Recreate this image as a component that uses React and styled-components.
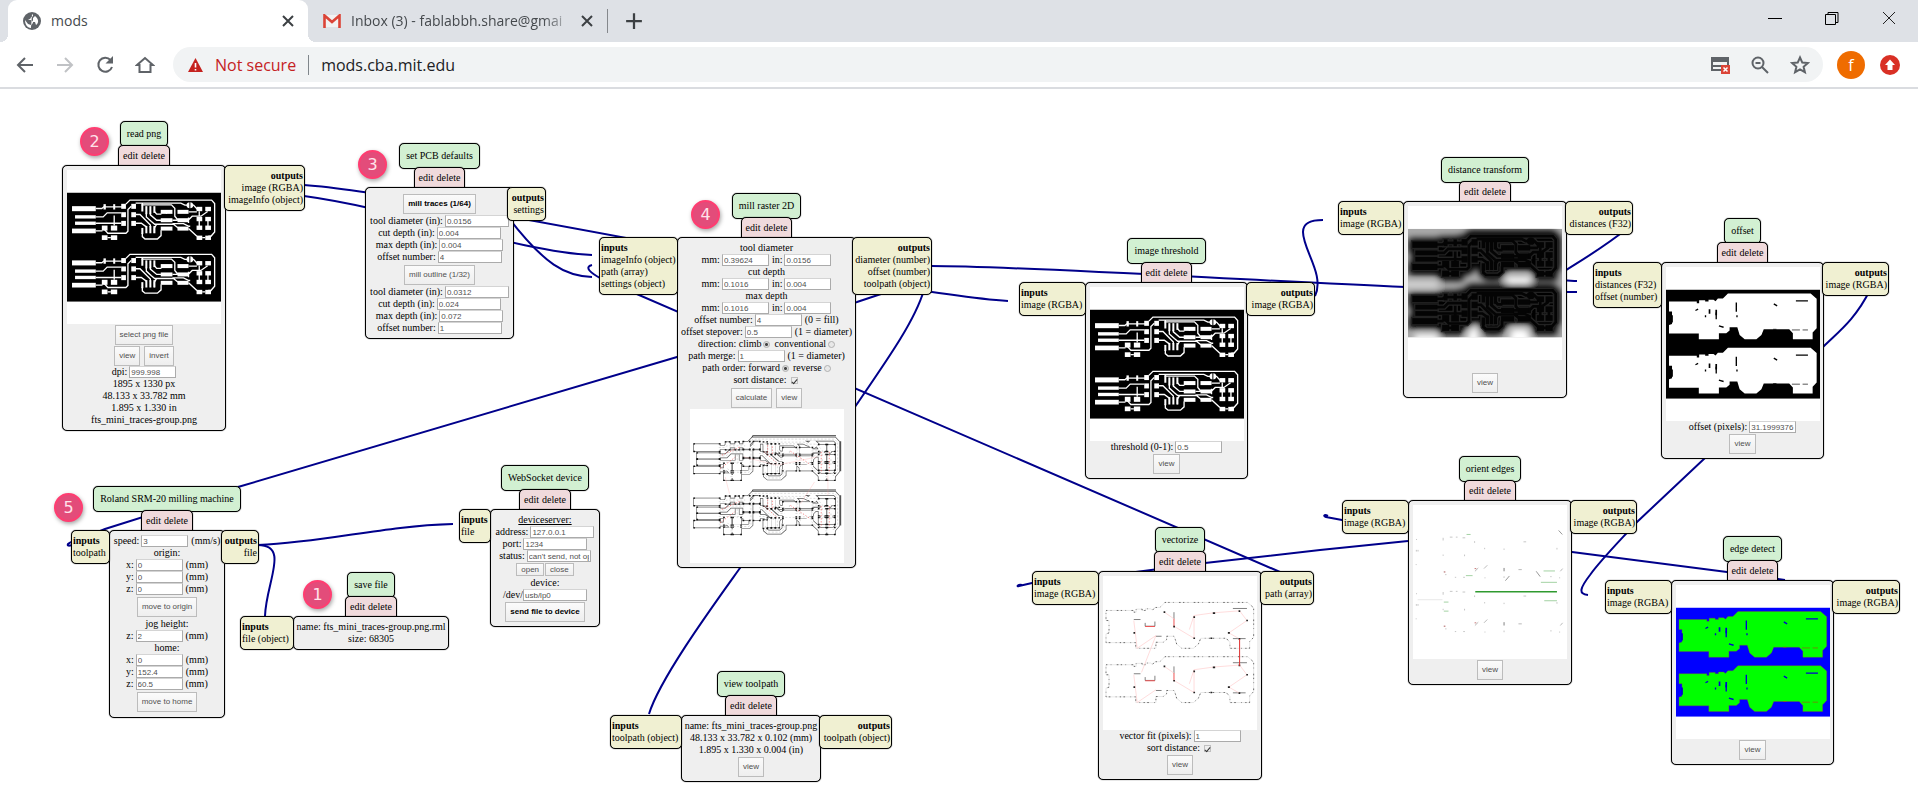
import React from "react";
import styled, { createGlobalStyle, css } from "styled-components";

const GlobalStyle = createGlobalStyle`
  * { box-sizing: border-box; }
  body { margin: 0; background: #fff; }
  button, input { font: inherit; margin: 0; }
  h2, p { margin: 0; font: inherit; }
`;

const UI_FONT = `"Open Sans", "Noto Sans", sans-serif`;
const NODE_FONT = `"Liberation Serif", "Times New Roman", serif`;
const CONTROL_FONT = `"Liberation Sans", Arial, sans-serif`;

/* ---------- browser frame ---------- */

const Page = styled.div`
  display: flex;
  flex-direction: column;
  min-height: 100vh;
  overflow: hidden;
`;

const TabStrip = styled.div`
  display: flex;
  align-items: center;
  height: 42px;
  padding-left: 8px;
  background: #dee1e6;
  font: 14px/20px ${UI_FONT};
  color: #45494d;
`;

const Tab = styled.div`
  position: relative;
  display: flex;
  align-items: center;
  gap: 10px;
  height: 42px;
  padding: 0 12px 0 15px;
  width: ${(p) => p.$width}px;
  ${(p) =>
    p.$active &&
    css`
      background: #fff;
      border-radius: 9px 9px 0 0;
      &::before,
      &::after {
        content: "";
        position: absolute;
        bottom: 0;
        width: 8px;
        height: 8px;
      }
      &::before {
        left: -8px;
        background: radial-gradient(circle at 0 0, #dee1e6 8px, #fff 8px);
      }
      &::after {
        right: -8px;
        background: radial-gradient(circle at 100% 0, #dee1e6 8px, #fff 8px);
      }
    `}
`;

const TabTitle = styled.span`
  flex: 1;
  white-space: nowrap;
  ${(p) => p.$fade && css`mask-image: linear-gradient(90deg, #000 88%, rgba(0, 0, 0, 0.2));`}
`;

const IconButton = styled.button`
  display: flex;
  flex: none;
  align-items: center;
  justify-content: center;
  width: ${(p) => p.$size || 16}px;
  height: ${(p) => p.$size || 16}px;
  padding: 0;
  border: 0;
  background: none;
  color: ${(p) => p.$color || "#3c4043"};
`;

const TabDivider = styled.span`
  width: 1px;
  height: 24px;
  margin-right: 17px;
  background: #85888c;
`;

const WindowControls = styled.div`
  display: flex;
  gap: 41px;
  margin: 0 21px 6px auto;
`;

const Toolbar = styled.div`
  display: flex;
  align-items: center;
  height: 47px;
  padding: 0 18px 0 15px;
  border-bottom: 2px solid #dadce0;
  background: #fff;
`;

const NavButtons = styled.div`
  display: flex;
  gap: 20px;
  margin-right: 18px;
`;

const AddressBar = styled.div`
  display: flex;
  flex: 1;
  align-items: center;
  height: 35px;
  padding: 0 13px;
  border-radius: 18px;
  background: #f1f3f4;
  font: 16px/22px ${UI_FONT};
`;

const SecurityNote = styled.span`
  margin-left: 10px;
  color: #c5221f;
`;

const AddressDivider = styled.span`
  width: 1px;
  height: 20px;
  margin: 0 12px;
  background: #80868b;
`;

const AddressInput = styled.input`
  flex: 1;
  min-width: 0;
  padding: 0;
  border: 0;
  background: none;
  color: #202124;
  outline: 0;
`;

const AddressActions = styled.div`
  display: flex;
  gap: 20px;
`;

const Avatar = styled.button`
  width: 28px;
  height: 28px;
  margin: 0 15px 0 14px;
  padding: 0;
  border: 0;
  border-radius: 50%;
  background: #ef6c00;
  color: #fff;
  font: 16px/24px ${UI_FONT};
`;

/* ---------- node canvas ---------- */

const Canvas = styled.main`
  position: relative;
  flex: 1;
  min-height: 720px;
  font: 10px/12px ${NODE_FONT};
  color: #000;
  white-space: nowrap;
`;

const Wires = styled.svg`
  position: absolute;
  top: 0;
  left: 0;
  overflow: visible;
  width: 100%;
  height: 100%;
`;

const NodeBox = styled.section`
  position: absolute;
  left: ${(p) => p.$left}px;
  top: ${(p) => p.$top}px;
  display: grid;
  grid-template-columns: ${(p) => p.$cols};
  align-items: start;
`;

const NodeHead = styled.header`
  grid-column: 2;
  display: flex;
  flex-direction: column;
  align-items: center;
`;

const outlined = css`
  border: 1px solid #000;
  border-radius: 5px;
  box-shadow: 0 0 1px #000;
`;

const NodeTitle = styled.h2`
  ${outlined}
  height: 26px;
  padding: 6px;
  background: #d2f0d2;
`;

const NodeActions = styled.div`
  ${outlined}
  position: relative;
  display: flex;
  gap: 3px;
  height: 21px;
  margin: -2px 0 -1px;
  padding: 4px;
  border-radius: 5px 5px 0 0;
  background: #f0dadc;
`;

const ActionButton = styled.button`
  padding: 0;
  border: 0;
  background: none;
  color: #000;
`;

const Body = styled.div`
  ${outlined}
  position: relative;
  grid-column: 2;
  grid-row: 2;
  display: flex;
  flex-direction: column;
  align-items: center;
  padding: 4px 0;
  background: #efefef;
`;

const Port = styled.div`
  ${outlined}
  position: relative;
  z-index: 1;
  grid-row: 2;
  grid-column: ${(p) => (p.$side === "in" ? 1 : 3)};
  margin: ${(p) => (p.$side === "in" ? "0 -1px 0 0" : `0 0 0 -${p.$overlap || 2}px`)};
  padding: 4px 1px;
  background: #f0f0d2;
  text-align: ${(p) => (p.$side === "in" ? "left" : "right")};
`;

const PortTitle = styled.strong`
  display: block;
`;

const Row = styled.div`
  display: flex;
  align-items: center;
  justify-content: center;
  gap: ${(p) => (p.$wide ? 4 : 3)}px;
  height: 12px;
  text-decoration: ${(p) => (p.$underline ? "underline" : "none")};
`;

const FieldLabel = styled.label`
  display: flex;
  align-items: center;
  gap: ${(p) => (p.$tight ? 0 : 2)}px;
`;

const TextBox = styled.input`
  width: ${(p) => p.$width || 47}px;
  height: 12px;
  padding: 0 1px;
  border: 1px solid #ababab;
  border-top-color: #d4d4d4;
  background: #fff;
  color: #505050;
  font: 8px/10px ${CONTROL_FONT};
`;

const Radio = styled.input`
  appearance: none;
  width: 7px;
  height: 7px;
  border: 1px solid #b0b0b0;
  border-radius: 50%;
  background: #e8e8e8;
  &:checked {
    background: radial-gradient(circle, #444 1px, #ddd 2px);
  }
`;

const Check = styled.input`
  appearance: none;
  display: grid;
  place-items: center;
  width: 7px;
  height: 7px;
  margin: 0 2px;
  border: 1px solid #c0c0c0;
  background: #eee;
  &:checked::after {
    content: "";
    width: 2px;
    height: 5px;
    border: solid #333;
    border-width: 0 1px 1px 0;
    transform: rotate(40deg);
  }
`;

const ButtonRow = styled.div`
  display: flex;
  align-items: center;
  gap: ${(p) => (p.$small ? 1 : 4)}px;
  height: ${(p) => (p.$small ? 15 : p.$tall ? 23 : 21)}px;
`;

const ControlButton = styled.button`
  height: ${(p) => (p.$small ? 13 : 20)}px;
  padding: 0 4px;
  border: 1px solid #bcbcbc;
  background: linear-gradient(#fbfbfb, #eeeeee);
  color: ${(p) => (p.$strong ? "#000" : "#505050")};
  font: ${(p) => (p.$strong ? "bold" : "normal")} 8px/10px ${CONTROL_FONT};
`;

const Thumb = styled.svg`
  display: block;
  width: 154px;
  height: 154px;
  background: #fff;
`;

const Badge = styled.span`
  position: absolute;
  left: ${(p) => p.$x - 14}px;
  top: ${(p) => p.$y - 14}px;
  width: 29px;
  height: 29px;
  border: 2px solid #ff3d71;
  border-radius: 50%;
  background: #e34c7a;
  box-shadow: 1px 2px 4px rgba(0, 0, 0, 0.35);
  color: #ffe3ea;
  font: 16px/25px "DejaVu Sans", sans-serif;
  text-align: center;
`;

/* ---------- drawings ---------- */

const PADS = [
  [15, 40, 71, 15], [24, 67, 62, 10], [24, 86, 62, 10], [15, 107, 71, 14],
  [109, 34, 7, 16], [138, 34, 6, 16],
  [162, 33, 14, 15], [162, 58, 14, 15], [162, 84, 14, 15],
  [192, 33, 14, 15], [192, 58, 14, 15], [192, 84, 14, 15],
  [104, 98, 17, 15], [131, 98, 19, 15], [104, 127, 17, 14], [131, 127, 19, 14],
  [222, 34, 6, 22], [234, 40, 6, 24], [246, 40, 6, 24], [258, 40, 6, 20],
  [222, 105, 6, 18], [234, 99, 6, 22], [246, 99, 6, 22], [258, 99, 6, 22],
  [280, 51, 35, 12], [280, 76, 35, 12], [280, 101, 35, 12],
  [330, 51, 33, 12], [330, 76, 33, 12], [330, 101, 33, 12],
  [387, 42, 17, 13], [413, 42, 17, 13], [387, 72, 17, 13], [413, 72, 17, 13],
  [387, 98, 17, 13], [413, 98, 17, 13], [387, 128, 17, 13], [413, 128, 17, 13],
];

const TRACES = [
  "M86 47H104L110 42H165", "M86 72H108L120 60H162", "M86 91H162", "M86 114H106",
  "M141 68V98", "M112 110L122 121H176L182 115V50L192 40", "M176 34L188 22H432L441 32V117L430 130H422",
  "M205 31H340L352 37H378L390 50", "M225 31V36H312L322 46V70L332 82", "M249 60V66L268 82H282",
  "M206 65H218L249 96V103", "M206 91H222L237 102", "M237 62V72L252 86L262 94H318L332 105",
  "M261 56L268 64H282", "M297 63V57", "M315 92H348L364 100H368", "M363 57H388", "M363 107L388 130",
  "M225 120V131L233 138H270L281 128V112", "M261 120V105L268 94", "M362 82L374 70H400L420 56",
  "M395 55V72", "M421 82V102", "M395 82V102", "M121 134H131", "M404 134H413", "M315 82H330", "M363 90V74",
];

const SILHOUETTE =
  "M9 35H92V40H99V31H117V35H127V30H142L148 34L155 26H170L185 11H432L450 27V115L438 128V148H379V130L368 118H292L285 135L270 148H235L220 135L213 112L190 112V122L180 130H158V148H98V131H9V105L18 102V65H9Z";

const SLOTS = "M388 33H424M210 38V66M322 42L332 48M88 62L96 58M118 76V82M150 68V88M158 108L172 112M212 76V82";

function Board({ color, grow = 0 }) {
  return (
    <g fill={color} stroke="none">
      {PADS.map(([x, y, w, h], i) => (
        <rect key={i} x={x - grow} y={y - grow} width={w + grow * 2} height={h + grow * 2} />
      ))}
      <ellipse cx="367" cy="37" rx={10 + grow} ry={9 + grow} />
      <path d={TRACES.join("")} fill="none" stroke={color} strokeWidth={4 + grow * 2} />
    </g>
  );
}

function Twice({ children }) {
  return (
    <>
      <g>{children}</g>
      <g transform="translate(0 162)">{children}</g>
    </>
  );
}

function TracesArt() {
  return (
    <>
      <rect width="460" height="325" />
      <Twice>
        <Board color="#fff" />
        <path d="M367 26V48" stroke="#000" strokeWidth="3" />
      </Twice>
    </>
  );
}

function DistanceArt() {
  return (
    <>
      <defs>
        <filter id="soft" x="-10%" y="-10%" width="120%" height="120%">
          <feGaussianBlur stdDeviation="9" />
        </filter>
        <filter id="faint"><feGaussianBlur stdDeviation="2" /></filter>
        <clipPath id="frame"><rect width="460" height="325" /></clipPath>
      </defs>
      <g clipPath="url(#frame)">
        <rect width="460" height="325" fill="#a8a8a8" />
        <g filter="url(#soft)">
          <path d="M-20 162H90V172H-20ZM290 145H370L360 170H300ZM300 345L310 300H355L370 345ZM170 345L190 295H205L215 345ZM20 345V315H90V345Z" fill="#fff" />
          <Twice>
            <path d={SILHOUETTE} fill="#000" stroke="#000" strokeWidth="14" />
          </Twice>
        </g>
        <g filter="url(#faint)">
          <Twice>
            <Board color="#242424" grow={6} />
          </Twice>
        </g>
        <Twice>
          <Board color="#040404" grow={2} />
        </Twice>
      </g>
    </>
  );
}

function FilledArt({ back, fill, slot, edge }) {
  return (
    <>
      <rect width="460" height="325" fill={back} />
      <Twice>
        <path d={SILHOUETTE} fill={fill} stroke={edge} strokeWidth="1" />
        <path d={SLOTS} stroke={slot} strokeWidth="4" fill="none" />
        <path d="M376 120H400M408 120H424M320 118H330" stroke={edge || slot} strokeWidth="2" />
        <path d="M130 58V72M150 60V76M18 76V98" stroke={slot} strokeWidth="5" />
      </Twice>
    </>
  );
}

function ToolpathArt() {
  return (
    <>
      <Twice>
        <path d="M182 24L188 12H436" fill="none" stroke="#333" strokeWidth="3" />
        <path d="M450 28V118" fill="none" stroke="#333" strokeWidth="3" />
        <Board color="#5a5a5a" grow={5} />
        <Board color="#fff" grow={3} />
        <path d={TRACES.join("")} fill="none" stroke="#ccc" strokeWidth="2" strokeDasharray="6 5" />
        {PADS.map(([x, y, w, h], i) => (
          <path
            key={i}
            d={`M${x - 5} ${y - 4}h5M${x + w} ${y - 4}h5M${x - 5} ${y + h + 4}h5M${x + w} ${y + h + 4}h5`}
            stroke="#111"
            strokeWidth="4"
          />
        ))}
        <path d="M95 70L150 45M90 110L135 76M222 60L262 96M232 40V64M246 44V66M392 60V124M416 60V124M300 58L360 98" stroke="#e33" strokeWidth="2" strokeDasharray="4 5" opacity=".8" />
      </Twice>
      <path d="M105 135L118 185M372 150L330 215M412 130V190M160 75L260 100L380 75" fill="none" stroke="#f99" strokeWidth="2" opacity=".4" />
    </>
  );
}

function VectorArt() {
  return (
    <>
      <Twice>
        <path d={SILHOUETTE} fill="none" stroke="#ddd" strokeWidth="2" />
        <path d={SILHOUETTE} fill="none" stroke="#333" strokeWidth="2" strokeDasharray="4 10 2 16 5 7" />
        <path d="M388 29H430M388 119H426M212 40V60M92 62H112M126 72V82H155V68M158 112H175" fill="none" stroke="#444" strokeWidth="2" />
        <path d="M92 65L102 148L158 110M183 40L212 60M212 82L272 118V50L330 42L408 36L430 65L376 102L408 120M258 92L272 50" fill="none" stroke="#fcc" strokeWidth="2" />
        <path d="M126 83H155M212 60V84" stroke="#e55" strokeWidth="3" />
        <path d="M181 40h5M210 83h5M270 55h5M270 118h5M328 43h7M405 37h5M428 65h5M373 102h6M405 120h5M91 102h5M321 118h5" stroke="#222" strokeWidth="5" />
      </Twice>
      <path d="M158 110L115 220" stroke="#fcc" strokeWidth="2" />
      <path d="M408 120V200" stroke="#d33" strokeWidth="3" />
    </>
  );
}

function OrientArt() {
  return (
    <>
      <Twice>
        <path
          d="M9 35h3M90 30v8M110 28h8M128 28h5M148 30h8M184 40v5M214 60v4M272 62v4M330 42h8M430 60v5M10 66v5M15 66v5M96 140h4M125 148h4M150 148h5M215 148v3M272 145v5M410 146h4M438 148v3M154 80v5M90 80v4M8 110h3M92 132h3"
          stroke="#aaa" strokeWidth="2" fill="none"
        />
        <path d="M185 130L195 120M212 122L222 112M440 130L447 122M315 125h10" stroke="#999" strokeWidth="2" fill="none" />
        <path d="M272 120v10" stroke="#444" strokeWidth="2" fill="none" />
        <path d="M92 132h5M184 122h5" stroke="#a33" strokeWidth="2" />
      </Twice>
      <path d="M14 215H88" stroke="#ddd" strokeWidth="2" />
      <path d="M186 191H430" stroke="#2f9a2f" strokeWidth="4" />
      <path d="M390 129H424M382 163H430M392 218H430M158 143H178M92 222H106M92 249H106M160 20H172" stroke="#7b7" strokeWidth="2" />
      <path d="M276 158L288 144M368 130L380 146M435 8L446 20" stroke="#666" strokeWidth="2" />
    </>
  );
}

const ART = {
  traces: <TracesArt />,
  distance: <DistanceArt />,
  offset: <FilledArt back="#000" fill="#fff" slot="#000" />,
  edges: <FilledArt back="#00f" fill="#0f0" slot="#0000d0" edge="#9a5a10" />,
  toolpath: <ToolpathArt />,
  vector: <VectorArt />,
  orient: <OrientArt />,
};

function Preview({ art }) {
  return (
    <Thumb viewBox="0 0 460 460" role="img" aria-label={`${art} preview`}>
      <g transform="translate(0 68)">{ART[art]}</g>
    </Thumb>
  );
}

/* ---------- node parts ---------- */

function Field({ label, value, width, tight }) {
  return (
    <FieldLabel $tight={tight}>
      {label}
      <TextBox $width={width} defaultValue={value} />
    </FieldLabel>
  );
}

function Node({ title, x, y, width, inputs, outputs, children }) {
  const inWidth = inputs ? inputs.width : 0;
  const outWidth = outputs ? outputs.width : 0;
  return (
    <NodeBox $left={x - inWidth} $top={y - 133} $cols={`${inWidth}px ${width}px ${outWidth}px`}>
      <NodeHead>
        <NodeTitle>{title}</NodeTitle>
        <NodeActions>
          <ActionButton>edit</ActionButton>
          <ActionButton>delete</ActionButton>
        </NodeActions>
      </NodeHead>
      {inputs && (
        <Port $side="in">
          <PortTitle>inputs</PortTitle>
          {inputs.rows.map((r) => <div key={r}>{r}</div>)}
        </Port>
      )}
      <Body>{children}</Body>
      {outputs && (
        <Port $side="out" $overlap={outputs.overlap}>
          <PortTitle>outputs</PortTitle>
          {outputs.rows.map((r) => <div key={r}>{r}</div>)}
        </Port>
      )}
    </NodeBox>
  );
}

const ViewButton = () => (
  <ButtonRow><ControlButton>view</ControlButton></ButtonRow>
);

const Axis = ({ name, value }) => (
  <Row><Field label={`${name}:`} value={value} />(mm)</Row>
);

const WIRES = [
  "M304 185C430 194 880 293 1008 301",
  "M304 196C400 209 520 252 592 255",
  "M508 217C545 265 565 276 592 277",
  "M1280 572L602 279C590 273 584 267 592 265",
  "M931 266C1050 266 1400 291 1577 292",
  "M1628 228C1600 250 1580 261 1560 274C1540 280 1560 280 1577 281",
  "M1870 290C1855 320 1838 332 1824 346L1637 522C1612 549 1600 561 1590 575C1580 588 1578 594 1588 595",
  "M1785 580L1727 572L1572 552L1342 520L1326 517C1323 516 1324 514 1328 516",
  "M1408 541L1320 550L1205 563L1128 573L1032 583L1019 586C1016 587 1018 584 1022 585",
  "M1315 296C1325 275 1303 250 1303 232C1303 222 1312 220 1323 220",
  "M890 291L857 302L677 357L238 487L105 529C82 538 71 541 68 544C67 546 69 546 72 545",
  "M924 290C915 320 890 356 857 404L740 568C715 603 660 678 649 714",
  "M258 545C330 542 380 526 453 524",
  "M258 545C290 545 266 582 265 616",
];

const rgba = "image (RGBA)";

/* ---------- icons ---------- */

const Stroke = ({ d, size = 16, width = 2, box = 16 }) => (
  <svg width={size} height={size} viewBox={`0 0 ${box} ${box}`} fill="none" stroke="currentColor" strokeWidth={width}>
    <path d={d} />
  </svg>
);

const CloseIcon = () => <Stroke d="M3 3L13 13M13 3L3 13" />;

function BrowserFrame() {
  return (
    <header>
      <TabStrip>
        <Tab $active $width={300}>
          <svg width="18" height="18" viewBox="0 0 18 18">
            <circle cx="9" cy="9" r="9" fill="#5f6368" />
            <path d="M9 2C11 3 10 5 8 5C8 7 6 7 5 8C7 8 10 8 10 10C10 12 8 12 8 16M8 16C4 16 2 12 2 8L5 12L8 13ZM12 4C16 7 16 11 13 13L12 10H10L10 6Z" fill="#fff" />
          </svg>
          <TabTitle>mods</TabTitle>
          <IconButton aria-label="Close tab"><CloseIcon /></IconButton>
        </Tab>
        <Tab $width={299}>
          <svg width="18" height="14" viewBox="0 0 18 14">
            <path d="M1 1H17V13H1Z" fill="#f2f2f2" />
            <path d="M1.5 14V1.5L9 8L16.5 1.5V14" fill="none" stroke="#db4437" strokeWidth="2.6" />
          </svg>
          <TabTitle $fade>Inbox (3) - fablabbh.share@gmai</TabTitle>
          <IconButton aria-label="Close tab"><CloseIcon /></IconButton>
        </Tab>
        <TabDivider />
        <IconButton aria-label="New tab" $size={18}><Stroke d="M8 1V15M1 8H15" size={18} /></IconButton>
        <WindowControls>
          <IconButton aria-label="Minimize" $color="#000"><Stroke d="M1 8.5H15" width={1} /></IconButton>
          <IconButton aria-label="Restore" $color="#000"><Stroke d="M1.5 4.5H11.500V14.500H1.500ZM4 4.500V2.500H14V12.500H12" width={1} /></IconButton>
          <IconButton aria-label="Close window" $color="#222"><Stroke d="M2 2L14 14M14 2L2 14" width={1} /></IconButton>
        </WindowControls>
      </TabStrip>
      <Toolbar>
        <NavButtons>
          <IconButton aria-label="Back" $size={20} $color="#5f6368"><Stroke d="M18 10H3M10 3L3 10L10 17" size={20} box={20} /></IconButton>
          <IconButton aria-label="Forward" $size={20} $color="#c0c2c5"><Stroke d="M2 10H17M10 3L17 10L10 17" size={20} box={20} /></IconButton>
          <IconButton aria-label="Reload" $size={20} $color="#5f6368">
            <svg width="20" height="20" viewBox="0 0 20 20">
              <path d="M15.500 5A7 7 0 1 0 17 12" fill="none" stroke="currentColor" strokeWidth="2" />
              <path d="M18 1V8.500H10.500Z" fill="currentColor" />
            </svg>
          </IconButton>
          <IconButton aria-label="Home" $size={20} $color="#5f6368"><Stroke d="M2 10L10 3L18 10H15.500V17H4.500V10Z" size={20} box={20} /></IconButton>
        </NavButtons>
        <AddressBar>
          <svg width="19" height="16" viewBox="0 0 19 16">
            <path d="M9.500 1L17 15H2Z" fill="#c5221f" />
            <path d="M9.500 6V10.500M9.500 12V13.500" stroke="#fff" strokeWidth="1.600" />
          </svg>
          <SecurityNote>Not secure</SecurityNote>
          <AddressDivider />
          <AddressInput aria-label="Address" defaultValue="mods.cba.mit.edu" />
          <AddressActions>
            <IconButton aria-label="Blocked content" $size={20}>
              <svg width="20" height="20" viewBox="0 0 20 20">
                <path d="M2 3H18V15H2Z" fill="none" stroke="#5f6368" strokeWidth="2" />
                <path d="M2 3H18V7H2ZM2 10H11V12H2Z" fill="#5f6368" />
                <path d="M11 10H20V19H11Z" fill="#db4437" />
                <path d="M13.500 12.500L17.500 16.500M17.500 12.500L13.500 16.500" stroke="#fff" strokeWidth="1.500" />
              </svg>
            </IconButton>
            <IconButton aria-label="Zoom" $size={20} $color="#5f6368">
              <svg width="20" height="20" viewBox="0 0 20 20" fill="none" stroke="currentColor" strokeWidth="2">
                <circle cx="8" cy="8" r="5.500" />
                <path d="M12 12L18 18M5.500 8H10.500" />
              </svg>
            </IconButton>
            <IconButton aria-label="Bookmark" $size={20} $color="#5f6368">
              <Stroke size={20} box={20} d="M10 2.500L12.300 7.600L17.800 8.100L13.600 11.800L14.900 17.200L10 14.300L5.100 17.200L6.400 11.800L2.200 8.100L7.700 7.600Z" />
            </IconButton>
          </AddressActions>
        </AddressBar>
        <Avatar aria-label="Profile">f</Avatar>
        <IconButton aria-label="Update" $size={20}>
          <svg width="20" height="20" viewBox="0 0 20 20">
            <circle cx="10" cy="10" r="10" fill="#d93025" />
            <path d="M10 4.500L15 10H12.500V15H7.500V10H5Z" fill="#fff" />
          </svg>
        </IconButton>
      </Toolbar>
    </header>
  );
}

export default function App() {
  return (
    <Page>
      <GlobalStyle />
      <BrowserFrame />
      <Canvas>
        <Wires>
          <g transform="translate(0 -89)" fill="none" stroke="#00008b" strokeWidth="2">
            {WIRES.map((d) => <path key={d} d={d} />)}
          </g>
        </Wires>

        <Node title="read png" x={62} y={165} width={164} outputs={{ width: 79, rows: [rgba, "imageInfo (object)"] }}>
          <Preview art="traces" />
          <ButtonRow><ControlButton>select png file</ControlButton></ButtonRow>
          <ButtonRow><ControlButton>view</ControlButton><ControlButton>invert</ControlButton></ButtonRow>
          <Row><Field label="dpi:" value="999.998" /></Row>
          <Row>1895 x 1330 px</Row>
          <Row>48.133 x 33.782 mm</Row>
          <Row>1.895 x 1.330 in</Row>
          <Row>fts_mini_traces-group.png</Row>
        </Node>

        <Node title="set PCB defaults" x={365} y={187} width={149} outputs={{ width: 32, overlap: 7, rows: ["settings"] }}>
          <ButtonRow $tall><ControlButton $strong>mill traces (1/64)</ControlButton></ButtonRow>
          <Row><Field label="tool diameter (in):" value="0.0156" width={64} /></Row>
          <Row><Field label="cut depth (in):" value="0.004" width={64} /></Row>
          <Row><Field label="max depth (in):" value="0.004" width={64} /></Row>
          <Row><Field label="offset number:" value="4" width={64} /></Row>
          <ButtonRow $tall><ControlButton>mill outline (1/32)</ControlButton></ButtonRow>
          <Row><Field label="tool diameter (in):" value="0.0312" width={64} /></Row>
          <Row><Field label="cut depth (in):" value="0.024" width={64} /></Row>
          <Row><Field label="max depth (in):" value="0.072" width={64} /></Row>
          <Row><Field label="offset number:" value="1" width={64} /></Row>
        </Node>

        <Node
          title="mill raster 2D" x={677} y={237} width={179}
          inputs={{ width: 78, rows: ["imageInfo (object)", "path (array)", "settings (object)"] }}
          outputs={{ width: 76, overlap: 4, rows: ["diameter (number)", "offset (number)", "toolpath (object)"] }}
        >
          <Row>tool diameter</Row>
          <Row><Field label="mm:" value="0.39624" /><Field label="in:" value="0.0156" /></Row>
          <Row>cut depth</Row>
          <Row><Field label="mm:" value="0.1016" /><Field label="in:" value="0.004" /></Row>
          <Row>max depth</Row>
          <Row><Field label="mm:" value="0.1016" /><Field label="in:" value="0.004" /></Row>
          <Row><Field label="offset number:" value="4" />(0 = fill)</Row>
          <Row><Field label="offset stepover:" value="0.5" />(1 = diameter)</Row>
          <Row $wide>
            <FieldLabel>direction: climb <Radio type="radio" name="direction" defaultChecked /></FieldLabel>
            <FieldLabel>conventional <Radio type="radio" name="direction" /></FieldLabel>
          </Row>
          <Row><Field label="path merge:" value="1" />(1 = diameter)</Row>
          <Row $wide>
            <FieldLabel>path order: forward <Radio type="radio" name="order" defaultChecked /></FieldLabel>
            <FieldLabel>reverse <Radio type="radio" name="order" /></FieldLabel>
          </Row>
          <Row><FieldLabel>sort distance: <Check type="checkbox" defaultChecked /></FieldLabel></Row>
          <ButtonRow $tall><ControlButton>calculate</ControlButton><ControlButton>view</ControlButton></ButtonRow>
          <Preview art="toolpath" />
        </Node>

        <Node title="image threshold" x={1085} y={282} width={163} inputs={{ width: 66, rows: [rgba] }} outputs={{ width: 67, rows: [rgba] }}>
          <Preview art="traces" />
          <Row><Field label="threshold (0-1):" value="0.5" /></Row>
          <ViewButton />
        </Node>

        <Node title="distance transform" x={1403} y={201} width={164} inputs={{ width: 65, rows: [rgba] }} outputs={{ width: 66, rows: ["distances (F32)"] }}>
          <Preview art="distance" />
          <Row />
          <ViewButton />
        </Node>

        <Node title="offset" x={1661} y={262} width={163} inputs={{ width: 68, rows: ["distances (F32)", "offset (number)"] }} outputs={{ width: 65, rows: [rgba] }}>
          <Preview art="offset" />
          <Row><Field label="offset (pixels):" value="31.1999376" /></Row>
          <ViewButton />
        </Node>

        <Node title="orient edges" x={1408} y={500} width={164} inputs={{ width: 66, rows: [rgba] }} outputs={{ width: 65, rows: [rgba] }}>
          <Preview art="orient" />
          <ViewButton />
        </Node>

        <Node title="edge detect" x={1671} y={580} width={163} inputs={{ width: 66, rows: [rgba] }} outputs={{ width: 66, rows: [rgba] }}>
          <Preview art="edges" />
          <ViewButton />
        </Node>

        <Node title="vectorize" x={1098} y={571} width={164} inputs={{ width: 66, rows: [rgba] }} outputs={{ width: 52, rows: ["path (array)"] }}>
          <Preview art="vector" />
          <Row><Field label="vector fit (pixels):" value="1" /></Row>
          <Row><FieldLabel>sort distance: <Check type="checkbox" defaultChecked /></FieldLabel></Row>
          <ViewButton />
        </Node>

        <Node title="view toolpath" x={681} y={715} width={140} inputs={{ width: 71, rows: ["toolpath (object)"] }} outputs={{ width: 71, rows: ["toolpath (object)"] }}>
          <Row>name: fts_mini_traces-group.png</Row>
          <Row>48.133 x 33.782 x 0.102 (mm)</Row>
          <Row>1.895 x 1.330 x 0.004 (in)</Row>
          <ViewButton />
        </Node>

        <Node title="Roland SRM-20 milling machine" x={109} y={530} width={116} inputs={{ width: 38, rows: ["toolpath"] }} outputs={{ width: 34, overlap: 4, rows: ["file"] }}>
          <Row><Field label="speed:" value="3" />(mm/s)</Row>
          <Row>origin:</Row>
          <Axis name="x" value="0" />
          <Axis name="y" value="0" />
          <Axis name="z" value="0" />
          <ButtonRow $tall><ControlButton>move to origin</ControlButton></ButtonRow>
          <Row>jog height:</Row>
          <Axis name="z" value="2" />
          <Row>home:</Row>
          <Axis name="x" value="0" />
          <Axis name="y" value="152.4" />
          <Axis name="z" value="60.5" />
          <ButtonRow $tall><ControlButton>move to home</ControlButton></ButtonRow>
        </Node>

        <Node title="save file" x={293} y={616} width={156} inputs={{ width: 53, rows: ["file (object)"] }}>
          <Row>name: fts_mini_traces-group.png.rml</Row>
          <Row>size: 68305</Row>
        </Node>

        <Node title="WebSocket device" x={490} y={509} width={110} inputs={{ width: 31, rows: ["file"] }}>
          <Row $underline>deviceserver:</Row>
          <Row><Field label="address:" value="127.0.0.1" width={64} /></Row>
          <Row><Field label="port:" value="1234" width={64} /></Row>
          <Row><Field label="status:" value="can't send, not open" width={64} /></Row>
          <ButtonRow $small><ControlButton $small>open</ControlButton><ControlButton $small>close</ControlButton></ButtonRow>
          <Row>device:</Row>
          <Row><Field tight label="/dev/" value="usb/lp0" width={64} /></Row>
          <ButtonRow><ControlButton $strong>send file to device</ControlButton></ButtonRow>
        </Node>

        <Badge $x={317} $y={505}>1</Badge>
        <Badge $x={94} $y={52}>2</Badge>
        <Badge $x={372} $y={75}>3</Badge>
        <Badge $x={705} $y={125}>4</Badge>
        <Badge $x={68} $y={418}>5</Badge>
      </Canvas>
    </Page>
  );
}
